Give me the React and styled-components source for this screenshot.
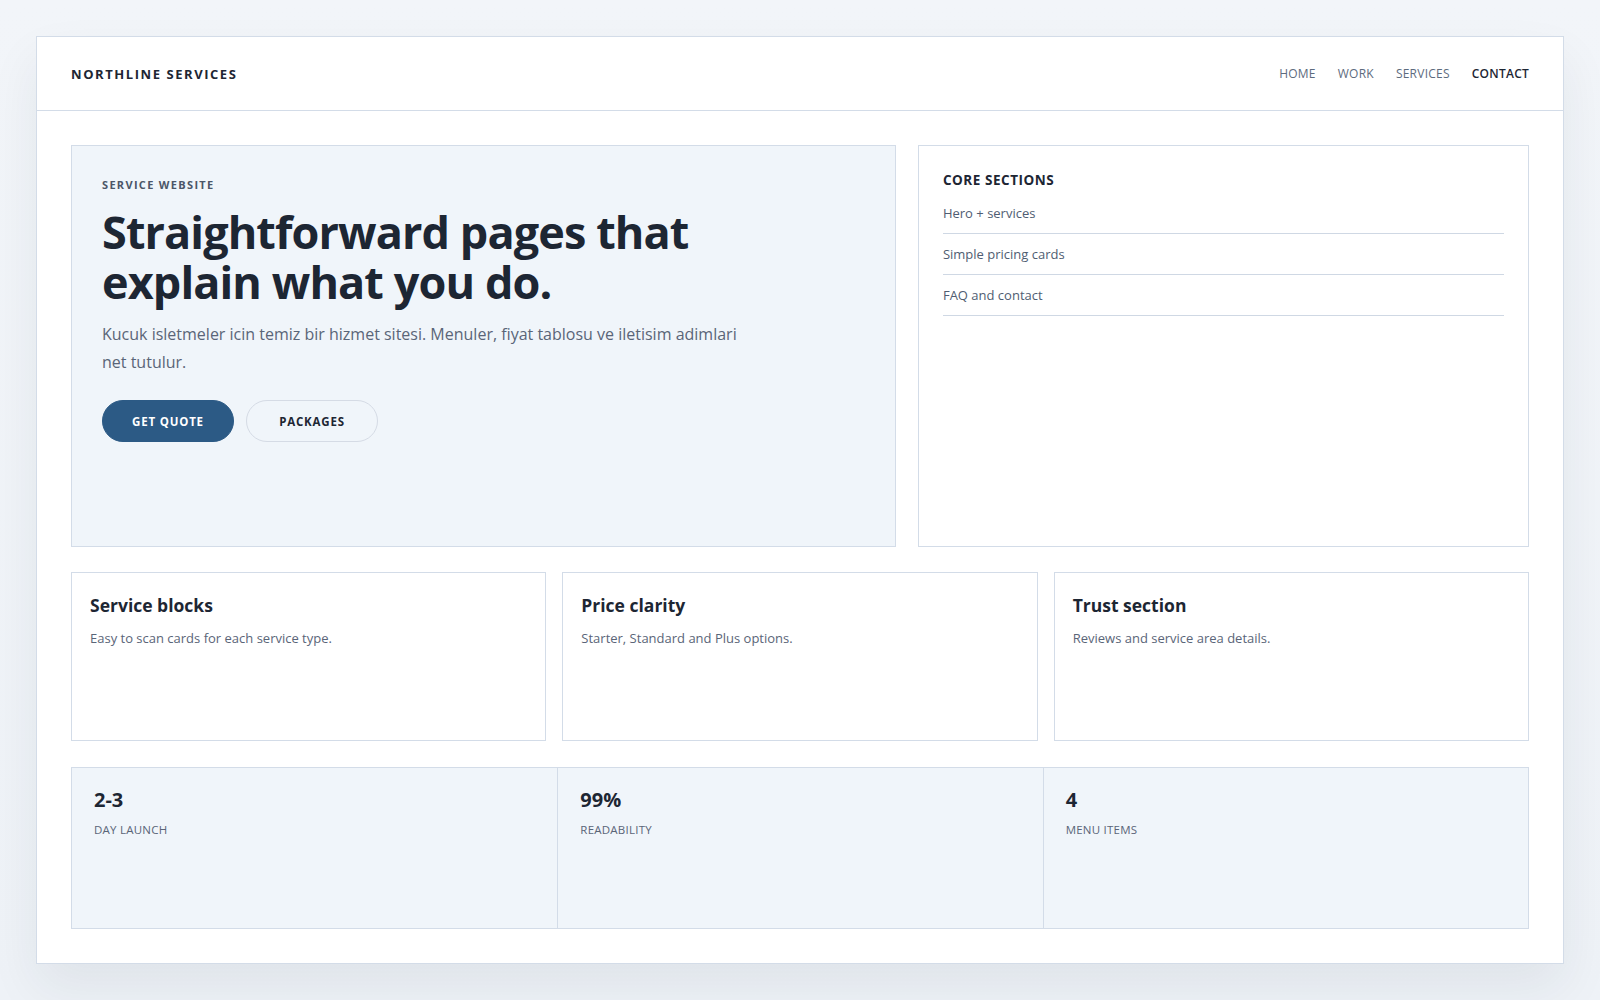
import React from 'react';
import styled, { createGlobalStyle } from 'styled-components';

const GlobalStyle = createGlobalStyle`
  * { box-sizing: border-box; }
  body {
    margin: 0;
    background: linear-gradient(180deg, #f2f5f9 0%, #eef2f7 100%);
    font-family: "Open Sans", "Noto Sans", sans-serif;
    color: #1d2633;
  }
`;

const Page = styled.div`
  padding: 36px;
  min-height: 1000px;
`;

const Panel = styled.div`
  background: #ffffff;
  border: 1px solid #d3dce8;
  box-shadow: 0 24px 48px rgba(30, 41, 59, 0.07);
`;

const Header = styled.header`
  height: 74px;
  padding: 0 34px;
  display: flex;
  align-items: center;
  justify-content: space-between;
  border-bottom: 1px solid #d3dce8;
`;

const Brand = styled.div`
  font-size: 13px;
  font-weight: 700;
  letter-spacing: 0.12em;
  color: #1d2633;
`;

const Nav = styled.nav`
  display: flex;
  gap: 22px;
`;

const NavLink = styled.a`
  font-size: 12px;
  letter-spacing: 0.02em;
  color: ${({ $active }) => ($active ? '#1d2633' : '#5d6b7e')};
  font-weight: ${({ $active }) => ($active ? 600 : 400)};
  text-decoration: none;
`;

const Main = styled.main`
  padding: 34px;
  display: flex;
  flex-direction: column;
  gap: 25px;
`;

const TopRow = styled.div`
  display: grid;
  grid-template-columns: 1.35fr 1fr;
  gap: 22px;
`;

const Hero = styled.section`
  min-height: 402px;
  background: #f0f5fa;
  border: 1px solid #d3dce8;
  padding: 30px 30px;
`;

const Eyebrow = styled.div`
  font-size: 11px;
  font-weight: 700;
  letter-spacing: 0.12em;
  color: #4b5668;
  margin-top: 1px;
`;

const Title = styled.h1`
  margin: 15px 0 0;
  font-size: 45px;
  line-height: 50px;
  font-weight: 700;
  letter-spacing: -0.02em;
  color: #1d2633;
`;

const Lead = styled.p`
  margin: 14px 0 0;
  max-width: 640px;
  font-size: 16px;
  line-height: 27.5px;
  color: #5a6578;
`;

const Actions = styled.div`
  display: flex;
  gap: 12px;
  margin-top: 24px;
`;

const Button = styled.button`
  width: 132px;
  height: 42px;
  border-radius: 21px;
  font-family: inherit;
  font-size: 11.5px;
  font-weight: 700;
  letter-spacing: 0.07em;
  cursor: pointer;
  border: 1px solid ${({ $primary }) => ($primary ? '#2c5a85' : '#d5dbe5')};
  background: ${({ $primary }) => ($primary ? '#2c5a85' : 'transparent')};
  color: ${({ $primary }) => ($primary ? '#ffffff' : '#1d2633')};
`;

const Aside = styled.aside`
  border: 1px solid #d3dce8;
  padding: 25px 24px 24px;
`;

const AsideTitle = styled.div`
  font-size: 13.5px;
  font-weight: 700;
  letter-spacing: 0.04em;
  color: #1d2633;
`;

const List = styled.ul`
  list-style: none;
  margin: 4px 0 0;
  padding: 0;
`;

const Item = styled.li`
  font-size: 13px;
  color: #4f5d72;
  height: 41px;
  display: flex;
  align-items: center;
  border-bottom: 1px solid #cfd8e4;
`;

const Cards = styled.div`
  display: grid;
  grid-template-columns: repeat(3, 1fr);
  gap: 16px;
`;

const Card = styled.div`
  height: 169px;
  border: 1px solid #d3dce8;
  padding: 19px 18px;
`;

const CardTitle = styled.h3`
  margin: 0;
  font-size: 17.5px;
  line-height: 26px;
  font-weight: 700;
  color: #1d2633;
`;

const CardText = styled.p`
  margin: 11px 0 0;
  font-size: 13px;
  color: #5a6578;
`;

const Stats = styled.div`
  display: grid;
  grid-template-columns: repeat(3, 1fr);
  height: 162px;
  margin-top: 1px;
  border: 1px solid #d3dce8;
  background: #f0f5fa;
`;

const Stat = styled.div`
  padding: 19px 22px;
  & + & { border-left: 1px solid #d3dce8; }
`;

const StatValue = styled.div`
  font-size: 20px;
  line-height: 26px;
  font-weight: 700;
  color: #1d2633;
`;

const StatLabel = styled.div`
  margin-top: 9px;
  font-size: 11.5px;
  letter-spacing: 0.02em;
  color: #5a6578;
`;

const navItems = ['HOME', 'WORK', 'SERVICES', 'CONTACT'];

const cards = [
  { title: 'Service blocks', text: 'Easy to scan cards for each service type.' },
  { title: 'Price clarity', text: 'Starter, Standard and Plus options.' },
  { title: 'Trust section', text: 'Reviews and service area details.' },
];

const stats = [
  { value: '2-3', label: 'DAY LAUNCH' },
  { value: '99%', label: 'READABILITY' },
  { value: '4', label: 'MENU ITEMS' },
];

const App = () => {
  return (
    <Page>
      <GlobalStyle />
      <Panel>
        <Header>
          <Brand>NORTHLINE SERVICES</Brand>
          <Nav>
            {navItems.map((item) => (
              <NavLink key={item} $active={item === 'CONTACT'}>{item}</NavLink>
            ))}
          </Nav>
        </Header>
        <Main>
          <TopRow>
            <Hero>
              <Eyebrow>SERVICE WEBSITE</Eyebrow>
              <Title>Straightforward pages that<br />explain what you do.</Title>
              <Lead>Kucuk isletmeler icin temiz bir hizmet sitesi. Menuler, fiyat tablosu ve iletisim adimlari net tutulur.</Lead>
              <Actions>
                <Button $primary>GET QUOTE</Button>
                <Button>PACKAGES</Button>
              </Actions>
            </Hero>
            <Aside>
              <AsideTitle>CORE SECTIONS</AsideTitle>
              <List>
                <Item>Hero + services</Item>
                <Item>Simple pricing cards</Item>
                <Item>FAQ and contact</Item>
              </List>
            </Aside>
          </TopRow>
          <Cards>
            {cards.map((c) => (
              <Card key={c.title}>
                <CardTitle>{c.title}</CardTitle>
                <CardText>{c.text}</CardText>
              </Card>
            ))}
          </Cards>
          <Stats>
            {stats.map((s) => (
              <Stat key={s.label}>
                <StatValue>{s.value}</StatValue>
                <StatLabel>{s.label}</StatLabel>
              </Stat>
            ))}
          </Stats>
        </Main>
      </Panel>
    </Page>
  );
};

export default App;
